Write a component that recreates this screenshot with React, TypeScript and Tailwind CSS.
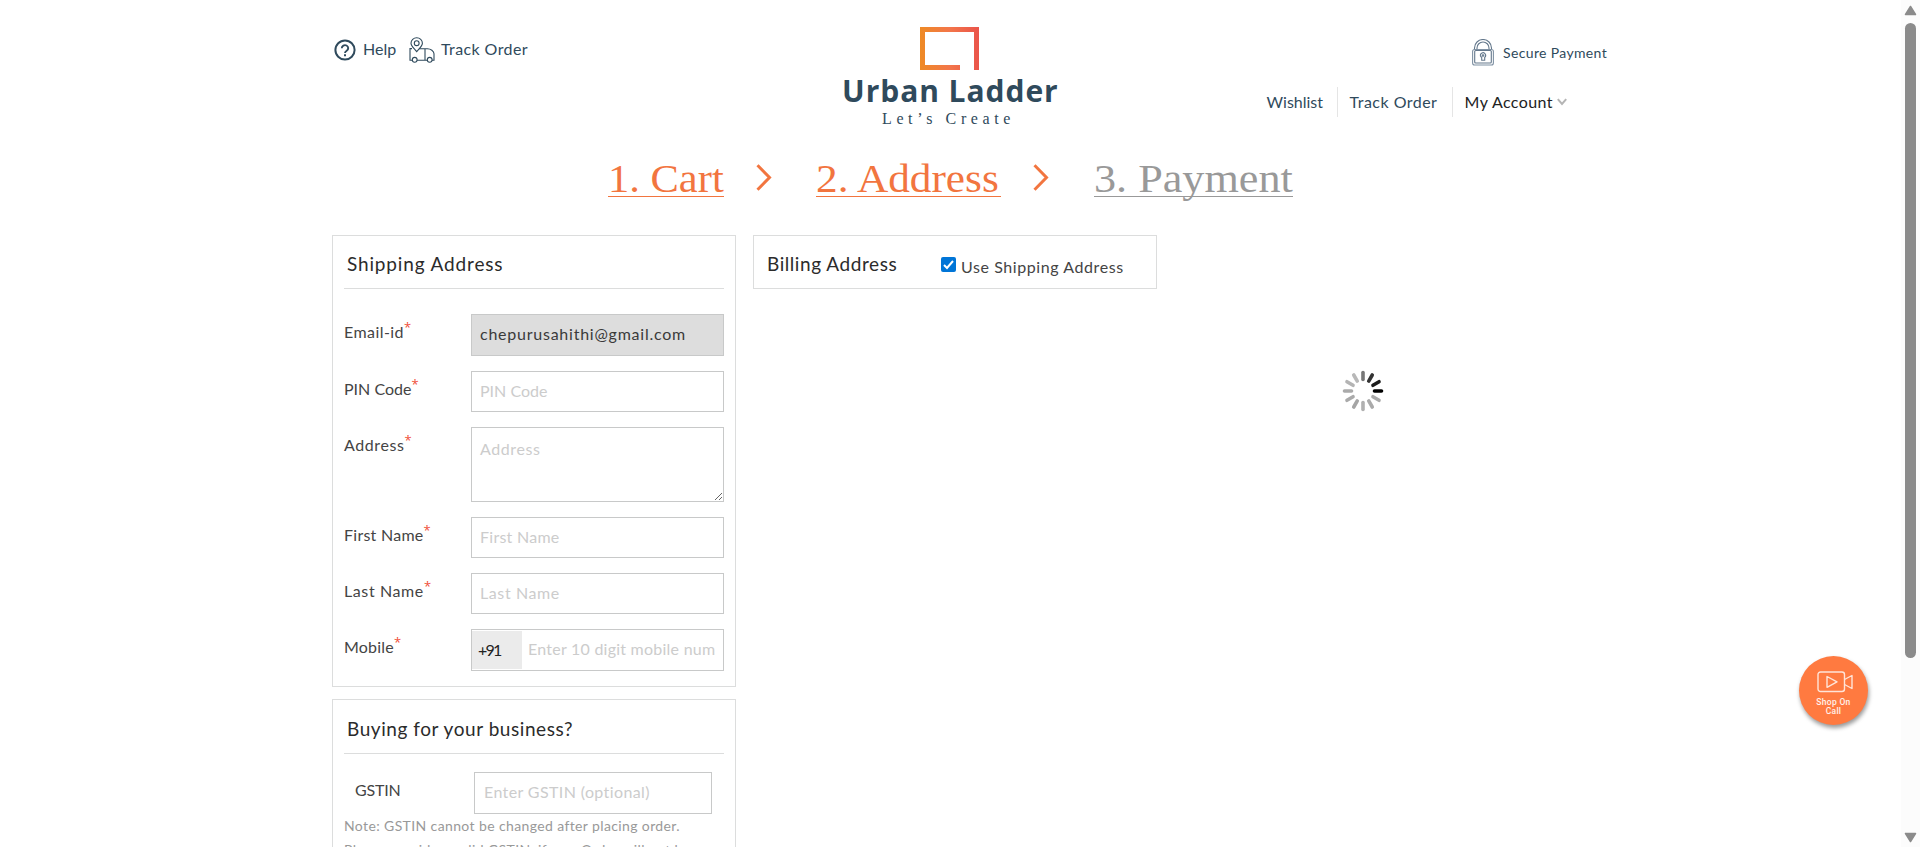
import React from 'react';

function HelpIcon() {
  return (
    <svg width="22" height="22" viewBox="0 0 22 22" fill="none" stroke="#2f4a5c">
      <circle cx="11" cy="11" r="9.6" strokeWidth="2" />
      <path d="M7.8 9.2a3.2 3 0 1 1 4.9 2.5c-1.1.7-1.7 1.1-1.7 2.3" strokeWidth="1.9" />
      <path d="M11 15.2v2" strokeWidth="2" />
    </svg>
  );
}

function TruckIcon() {
  return (
    <svg width="26" height="26" viewBox="0 0 26 26" fill="none" stroke="#2f4a5c" strokeWidth="1.1">
      <path d="M3 11.6H1v11.6h2.4M8 23.2h11M23 23.2h2v-6.400C25 14 21.500 11.700 18.500 11.700H10M16 11.700v11.500" />
      <circle cx="5.700" cy="22.800" r="2.400" />
      <circle cx="20.700" cy="22.800" r="2.400" />
      <path d="M7.700 14.700C5.200 11.500 2 9 2 6.200a5.700 5.500 0 0 1 11.400 0c0 2.800-3.200 5.300-5.700 8.500z" />
      <circle cx="7.700" cy="6.200" r="2.400" />
    </svg>
  );
}

function LockIcon() {
  return (
    <svg width="22" height="27" viewBox="0 0 22 27" fill="none" stroke="#64788c" strokeWidth="1.1">
      <path d="M2.500 10.500V9a8.500 8.500 0 0 1 17 0v1.500M5 10.500V9a6 6 0 0 1 12 0v1.500" />
      <rect x=".6" y="10.500" width="20.800" height="15.500" rx="2" stroke="#7f91a3" />
      <rect x="2.700" y="11.500" width="16.600" height="12.500" rx="1" />
      <path d="M8.500 17a2.600 2.600 0 1 1 4.200 1.300v3h-3v-3A2.600 2.600 0 0 1 8.500 17z" />
      <circle cx="11" cy="16.500" r=".8" />
    </svg>
  );
}

function LogoMark() {
  return (
    <svg className="mr-[2px]" width="59" height="43" viewBox="0 0 59 43">
      <defs>
        <linearGradient id="mark" x1="0" x2="1" y1="0" y2="0">
          <stop offset="0" stopColor="#ee8a24" />
          <stop offset=".5" stopColor="#f3764a" />
          <stop offset="1" stopColor="#ea544a" />
        </linearGradient>
      </defs>
      <path d="M0 0H59V43H54V5H5V38H40V43H0Z" fill="url(#mark)" />
    </svg>
  );
}

function StepArrow() {
  return (
    <svg width="16" height="27" viewBox="0 0 16 27" fill="none" stroke="#f2753f" strokeWidth="3">
      <path d="M1.500 1.200 13.500 13.500 1.500 25.800" />
    </svg>
  );
}

const blades = ['#000', '#aaa', '#aaa', '#b0b0b0', '#a5a5a5', '#aaa', '#aaa', '#b4b4b4', '#b8b8b8', '#777', '#333', '#1c1c1c'];

function Spinner() {
  return (
    <svg width="42" height="42" viewBox="-21 -21 42 42">
      {blades.map((c, i) => (
        <path key={i} d="M11.500 0H18.500" stroke={c} strokeWidth="3.600" strokeLinecap="round" transform={`rotate(${i * 30})`} />
      ))}
    </svg>
  );
}

function Label({ children, spacing }: { children: string; spacing: string }) {
  return (
    <label className={`flex w-[127px] shrink-0 items-start text-base leading-9 text-[#444] ${spacing}`}>
      {children}
      <span className="font-['Open_Sans',sans-serif] text-[13px] leading-[27px] tracking-normal text-[#f04e37]">*</span>
    </label>
  );
}

const box = 'w-[253px] border border-[#c8c9c9] pl-2 pr-[9px] pb-[3px] text-base outline-none placeholder:text-[#ccc] placeholder:opacity-100';

export default function App() {
  return (
    <div className="flex h-[847px] w-[1920px] overflow-hidden bg-white font-['Lato',sans-serif]">
      <div className="relative w-[1901px] pl-[332px]">
        <header className="flex h-[164px]">
          <div className="mt-[37px] flex h-[26px] w-[512px] items-center pl-[2px] text-base leading-6 text-[#2f4a5c]">
            <HelpIcon />
            <span className="mb-[2px] ml-[7px] w-[46px]">Help</span>
            <TruckIcon />
            <span className="mb-[2px] ml-[6px] tracking-[0.4px]">Track Order</span>
          </div>
          <div className="flex w-[213px] flex-col items-center whitespace-nowrap pt-[27px] text-[#2f4a5c]">
            <LogoMark />
            <span className="mt-[3px] w-[217px] font-['Open_Sans',sans-serif] text-[30px] font-bold leading-9 tracking-[0.95px]">Urban Ladder</span>
            <span className="mr-[4px] font-['Liberation_Serif',serif] text-base leading-5 tracking-[4.6px]">Let’s Create</span>
          </div>
          <div className="flex w-[560px] flex-col items-end text-[#2f4a5c]">
            <div className="mr-[10px] mt-[38px] flex h-[28px] items-center">
              <LockIcon />
              <span className="ml-[9px] mt-[2px] text-sm tracking-[0.35px]">Secure Payment</span>
            </div>
            <nav className="mr-[50px] mt-[21px] flex h-[30px] items-center text-base leading-[30px]">
              <span className="w-[70px]">Wishlist</span>
              <span className="w-[115px] border-l border-[#e5e5e5] pl-[12px] tracking-[0.48px]">Track Order</span>
              <span className="flex items-center border-l border-[#e5e5e5] pl-[12px] tracking-[0.42px] text-[#222]">
                My Account
                <svg className="ml-1" width="10" height="8" viewBox="0 0 10 8" fill="none" stroke="#b5b5b5" strokeWidth="2">
                  <path d="M.8 1.200 5 6 9.200 1.200" />
                </svg>
              </span>
            </nav>
          </div>
        </header>

        <div className="flex h-[71px] whitespace-nowrap pl-[276px] font-['Liberation_Serif',serif] text-[39px] leading-[30px] text-[#f2753f]">
          <div className="h-[33px] w-[116px] border-b border-[#f2753f]">
            <span className="inline-block origin-left scale-x-[1.09]">1. Cart</span>
          </div>
          <span className="ml-8 w-[60px]"><StepArrow /></span>
          <div className="h-[33px] w-[185px] border-b border-[#f2753f]">
            <span className="inline-block origin-left scale-x-[1.11]">2. Address</span>
          </div>
          <span className="ml-8 w-[61px]"><StepArrow /></span>
          <div className="h-[33px] w-[199px] border-b border-[#999] text-[#999]">
            <span className="inline-block origin-left scale-x-[1.133]">3. Payment</span>
          </div>
        </div>

        <main className="flex items-start">
          <div className="flex w-[404px] flex-col gap-3">
            <section className="h-[452px] border border-[#dcdddd] px-[11px]">
              <h2 className="h-[53px] border-b border-[#dcdddd] pl-[3px] text-[19px] leading-[56px] tracking-[0.85px] text-[#2b2b2b]">Shipping Address</h2>
              <div className="flex flex-col pt-[25px]">
                <div className="mb-[15px] flex"><Label spacing="tracking-[0.44px]">Email-id</Label><input readOnly value="chepurusahithi@gmail.com" className={`${box} h-[42px] bg-[#ddd] tracking-[0.76px] text-[#3a3a3a]`} /></div>
                <div className="mb-[15px] flex"><Label spacing="tracking-normal">PIN Code</Label><input placeholder="PIN Code" className={`${box} h-[41px]`} /></div>
                <div className="mb-[15px] flex"><Label spacing="tracking-[0.59px]">Address</Label><textarea placeholder="Address" className={`${box} block h-[75px] resize pt-[9px] tracking-[0.59px]`} /></div>
                <div className="mb-[15px] flex"><Label spacing="tracking-[0.26px]">First Name</Label><input placeholder="First Name" className={`${box} h-[41px] tracking-[0.26px]`} /></div>
                <div className="mb-[15px] flex"><Label spacing="tracking-[0.6px]">Last Name</Label><input placeholder="Last Name" className={`${box} h-[41px] tracking-[0.6px]`} /></div>
                <div className="flex">
                  <Label spacing="tracking-[0.22px]">Mobile</Label>
                  <div className="flex h-[42px] w-[253px] items-center border border-[#c8c9c9]">
                    <span className="h-[38px] w-[50px] bg-[#ebebeb] pl-[6px] text-base leading-[38px] tracking-[-1.8px] text-[#222]">+91</span>
                    <input placeholder="Enter 10 digit mobile number" className="mb-[2px] ml-[6px] w-[187px] text-base tracking-[0.24px] outline-none placeholder:text-[#ccc] placeholder:opacity-100" />
                  </div>
                </div>
              </div>
            </section>
            <section className="h-[220px] border border-[#dcdddd] px-[11px]">
              <h2 className="h-[54px] border-b border-[#dcdddd] pl-[3px] text-[19px] leading-[58px] tracking-[0.56px] text-[#2b2b2b]">Buying for your business?</h2>
              <div className="mt-[18px] flex pl-[11px]">
                <label className="w-[119px] text-base leading-9 tracking-[-0.2px] text-[#444]">GSTIN</label>
                <input placeholder="Enter GSTIN (optional)" className="h-[42px] w-[238px] border border-[#c8c9c9] px-[9px] pb-[3px] text-base tracking-[0.38px] outline-none placeholder:text-[#ccc] placeholder:opacity-100" />
              </div>
              <p className="mt-[2px] whitespace-nowrap text-sm leading-[19px] tracking-[0.38px] text-[#999]">
                Note: GSTIN cannot be changed after placing order.<br />
                <span className="inline-block pt-[5px]">Please provide a valid GSTIN, if any. Order will not be</span>
              </p>
            </section>
          </div>

          <section className="ml-[17px] flex h-[54px] w-[404px] border border-[#dcdddd] pl-[13px]">
            <h2 className="w-[174px] text-[19px] leading-[56px] tracking-[0.56px] text-[#2b2b2b]">Billing Address</h2>
            <span className="mt-[21px] flex size-[15px] items-center justify-center rounded-[2px] bg-[#0075d7]">
              <svg width="13" height="13" viewBox="0 0 13 13" fill="none" stroke="#fff" strokeWidth="2"><path d="m2 7 3 3 6-7" /></svg>
            </span>
            <span className="ml-[5px] text-base leading-[62px] tracking-[0.58px] text-[#444]">Use Shipping Address</span>
          </section>

          <div className="ml-[185px] mt-[135px]"><Spinner /></div>
        </main>

        <button className="absolute left-[1799px] top-[656px] flex size-[69px] flex-col items-center rounded-full bg-[#ff7a40] pt-[15px] font-['Roboto',sans-serif] text-[8.5px] font-medium leading-[9px] tracking-[0.3px] text-white/90 shadow-[1px_3px_4px_rgba(0,0,0,0.4)]">
          <svg className="ml-[2px]" width="36" height="22" viewBox="0 0 36 22" fill="none" stroke="#ffe4d8" strokeWidth="1.400" strokeLinejoin="round">
            <rect x="1" y="1" width="26.500" height="19.500" rx="2.500" />
            <path d="M10 5.500v10.800l10-5.400zM27.500 8.500 35 4.500V17.500l-7.500-4" />
          </svg>
          <span className="mt-[5px]">Shop On<br />Call</span>
        </button>
      </div>

      <div className="flex w-[19px] flex-col items-center bg-[#fcfcfc] pt-[5px] pb-[4px]">
        <svg width="13" height="11" viewBox="0 0 13 11"><path d="M6.500 1.500 11.500 9.500H1.500Z" fill="#8b8b8b" stroke="#8b8b8b" strokeWidth="1.500" strokeLinejoin="round" /></svg>
        <div className="mt-[7px] h-[635px] w-[11px] rounded-full bg-[#8b8b8b]" />
        <svg className="mt-auto" width="13" height="11" viewBox="0 0 13 11"><path d="M6.500 9.500 1.500 1.500H11.500Z" fill="#8b8b8b" stroke="#8b8b8b" strokeWidth="1.500" strokeLinejoin="round" /></svg>
      </div>
    </div>
  );
}
